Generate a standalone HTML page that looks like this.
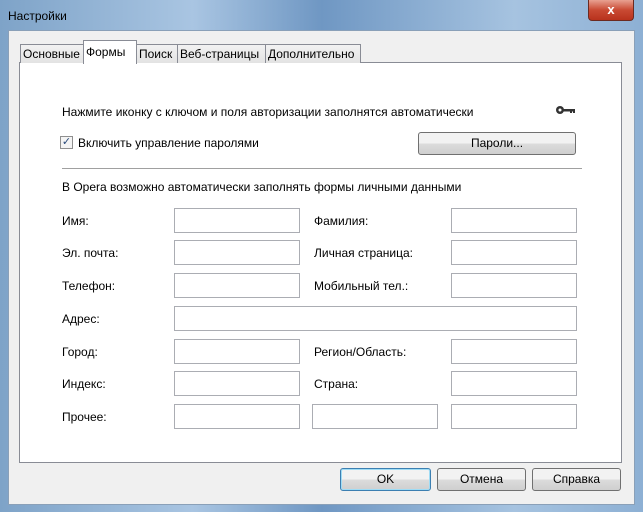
<html><head><style>
body{margin:0;width:643px;height:512px;overflow:hidden;font-family:"Liberation Sans",sans-serif;font-size:12px;color:#000}
.win{position:absolute;left:0;top:0;width:643px;height:512px;background:linear-gradient(90deg,#7ea3c8,#a9c5e2 30%,#6f97c3 50%,#a6c3e0 80%,#8db0d4);}
.title{position:absolute;left:8px;top:9px;font-size:12px}
.close{position:absolute;left:588px;top:0;width:44px;height:20px;background:linear-gradient(#e8a191,#c94a33 50%,#b8321d);border:1px solid #6b2a20;border-top:none;border-radius:0 0 4px 4px;color:#fff;font-weight:bold;text-align:center;line-height:19px;font-size:13px}
.client{position:absolute;left:8px;top:30px;width:627px;height:475px;background:#f0f0f0;border:1px solid #8aa0b8;box-sizing:border-box}
.panel{position:absolute;left:19px;top:62px;width:603px;height:401px;background:#fff;border:1px solid #898c95;box-sizing:border-box}
.tab{position:absolute;top:44px;height:18px;border:1px solid #898c95;border-bottom:none;background:linear-gradient(#f2f2f2,#e3e3e3);padding:0 2px;line-height:19px;box-sizing:content-box;font-size:12px}
.tab.sel{top:40px;height:23px;background:#fff;z-index:2;line-height:22px}
.t{position:absolute;font-size:12px;white-space:nowrap}
.in{position:absolute;width:126px;height:25px;border:1px solid #abadb3;box-sizing:border-box;background:#fff}
.btn{position:absolute;height:23px;border:1px solid #707070;border-radius:3px;background:linear-gradient(#f2f2f2 50%,#dcdcdc 50%,#cfcfcf);box-sizing:border-box;text-align:center;line-height:21px;font-size:12px}
</style></head><body>
<div class="win">
<div class="title">Настройки</div>
<div class="close">x</div>
<div class="client"></div>
<div class="panel"></div>
<div class="tab" style="left:20px;width:58px">Основные</div>
<div class="tab sel" style="left:83px;width:48px;">Формы</div>
<div class="tab" style="left:136px;width:36px">Поиск</div>
<div class="tab" style="left:177px;width:83px">Веб-страницы</div>
<div class="tab" style="left:265px;width:90px">Дополнительно</div>

<div class="t" style="left:62px;top:105px">Нажмите иконку с ключом и поля авторизации заполнятся автоматически</div>
<svg style="position:absolute;left:555px;top:105px" width="22" height="10"><circle cx="5" cy="5" r="4" fill="#333"/><circle cx="5" cy="5" r="1.5" fill="#fff"/><rect x="8" y="4" width="12" height="2.5" fill="#333"/><rect x="15" y="6" width="2" height="2" fill="#333"/><rect x="18" y="6" width="2" height="2" fill="#333"/></svg>
<div style="position:absolute;left:60px;top:136px;width:13px;height:13px;border:1px solid #8f8f8f;box-sizing:border-box;background:#f4f4f4;font-size:11px;line-height:11px;text-align:center;color:#2a4a7a">✓</div>
<div class="t" style="left:78px;top:136px">Включить управление паролями</div>
<div class="btn" style="left:418px;top:132px;width:158px">Пароли...</div>
<div style="position:absolute;left:62px;top:168px;width:520px;height:1px;background:#a0a0a0"></div>
<div class="t" style="left:62px;top:180px">В Opera возможно автоматически заполнять формы личными данными</div>

<div class="t" style="left:62px;top:214px">Имя:</div>
<div class="in" style="left:174px;top:208px"></div>
<div class="t" style="left:314px;top:214px">Фамилия:</div>
<div class="in" style="left:451px;top:208px"></div>

<div class="t" style="left:62px;top:246px">Эл. почта:</div>
<div class="in" style="left:174px;top:240px"></div>
<div class="t" style="left:314px;top:246px">Личная страница:</div>
<div class="in" style="left:451px;top:240px"></div>

<div class="t" style="left:62px;top:279px">Телефон:</div>
<div class="in" style="left:174px;top:273px"></div>
<div class="t" style="left:314px;top:279px">Мобильный тел.:</div>
<div class="in" style="left:451px;top:273px"></div>

<div class="t" style="left:62px;top:312px">Адрес:</div>
<div class="in" style="left:174px;top:306px;width:403px"></div>

<div class="t" style="left:62px;top:345px">Город:</div>
<div class="in" style="left:174px;top:339px"></div>
<div class="t" style="left:314px;top:345px">Регион/Область:</div>
<div class="in" style="left:451px;top:339px"></div>

<div class="t" style="left:62px;top:377px">Индекс:</div>
<div class="in" style="left:174px;top:371px"></div>
<div class="t" style="left:314px;top:377px">Страна:</div>
<div class="in" style="left:451px;top:371px"></div>

<div class="t" style="left:62px;top:410px">Прочее:</div>
<div class="in" style="left:174px;top:404px"></div>
<div class="in" style="left:312px;top:404px"></div>
<div class="in" style="left:451px;top:404px"></div>

<div class="btn" style="left:340px;top:468px;width:91px;border-color:#3c7fb1;box-shadow:inset 0 0 0 1px #9fdcf5">OK</div>
<div class="btn" style="left:437px;top:468px;width:89px">Отмена</div>
<div class="btn" style="left:532px;top:468px;width:89px">Справка</div>
</div>
</body></html>
